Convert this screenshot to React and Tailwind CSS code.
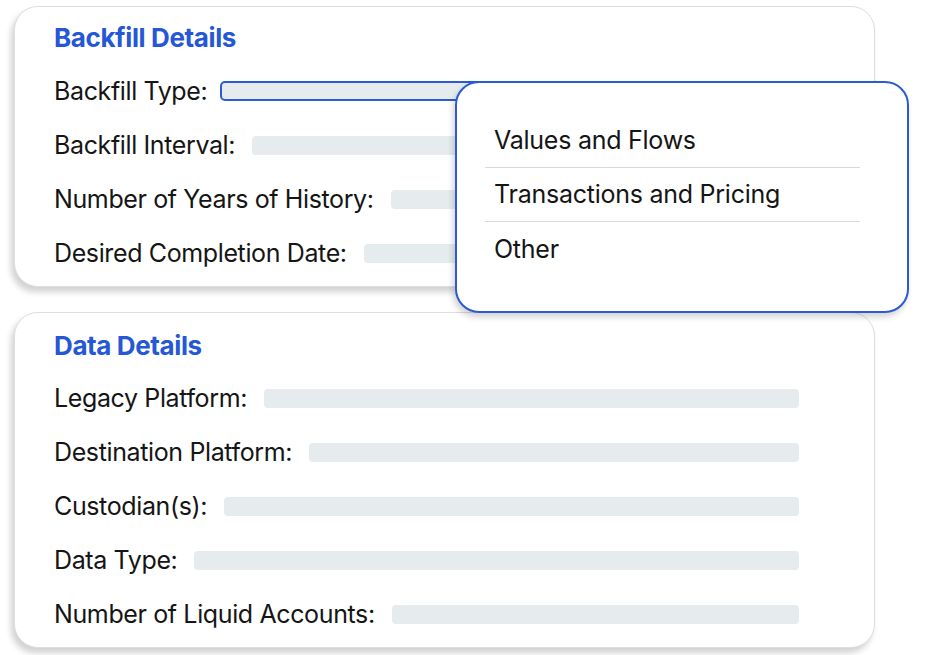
import React from "react";

const font = { fontFamily: "Inter, 'Noto Sans', sans-serif" };

function Row({ label, active = false }) {
  return (
    <div className="flex h-[54px] items-center">
      <span className="whitespace-nowrap text-[25px] leading-none tracking-[-0.015em] text-[#151515]">
        {label}
      </span>
      {active ? (
        <div className="ml-[13px] h-[20px] flex-1 rounded-[5px] border-2 border-[#2b5bd3] bg-[#e6ebee]" />
      ) : (
        <div className="ml-[17px] h-[19px] flex-1 rounded-[4px] bg-[#e6ebee]" />
      )}
    </div>
  );
}

export default function App() {
  return (
    <div style={font} className="relative h-[655px] w-[925px] overflow-hidden bg-white">
      <div className="flex w-[875px] flex-col gap-[25px] pl-[14px] pt-[6px]">
        <div className="h-[281px] rounded-[24px] border border-[#dedede] bg-white pl-[39px] pr-[75px] pt-[14px] pb-[6px] shadow-[-3px_5px_6px_rgba(0,0,0,0.18)]">
          <div className="flex h-[32px] items-center text-[26px] font-bold tracking-[-0.015em] text-[#2557d6]">
            Backfill Details
          </div>
          <div className="mt-[11px]">
            <Row label="Backfill Type:" active />
            <Row label="Backfill Interval:" />
            <Row label="Number of Years of History:" />
            <Row label="Desired Completion Date:" />
          </div>
        </div>
        <div className="h-[336px] rounded-[24px] border border-[#dedede] bg-white pl-[39px] pr-[75px] pt-[16px] pb-[6px] shadow-[-3px_5px_6px_rgba(0,0,0,0.18)]">
          <div className="flex h-[32px] items-center text-[26px] font-bold tracking-[-0.015em] text-[#2557d6]">
            Data Details
          </div>
          <div className="mt-[10px]">
            <Row label="Legacy Platform:" />
            <Row label="Destination Platform:" />
            <Row label="Custodian(s):" />
            <Row label="Data Type:" />
            <Row label="Number of Liquid Accounts:" />
          </div>
        </div>
      </div>

      <div className="absolute left-[455px] top-[81px] h-[232px] w-[454px] rounded-[24px] border-2 border-[#2b5bd3] bg-white pt-[31px] shadow-[-2px_4px_6px_rgba(0,0,0,0.18)]">
        {["Values and Flows", "Transactions and Pricing", "Other"].map((t, i) => (
          <div key={t} className="flex h-[54px] flex-col">
            <div className="flex flex-1 items-center pl-[37px] text-[25px] leading-none tracking-[-0.01em] text-[#151515]">
              {t}
            </div>
            {i < 2 && <div className="ml-[28px] h-px w-[375px] bg-[#d9d9d9]" />}
          </div>
        ))}
      </div>
    </div>
  );
}
